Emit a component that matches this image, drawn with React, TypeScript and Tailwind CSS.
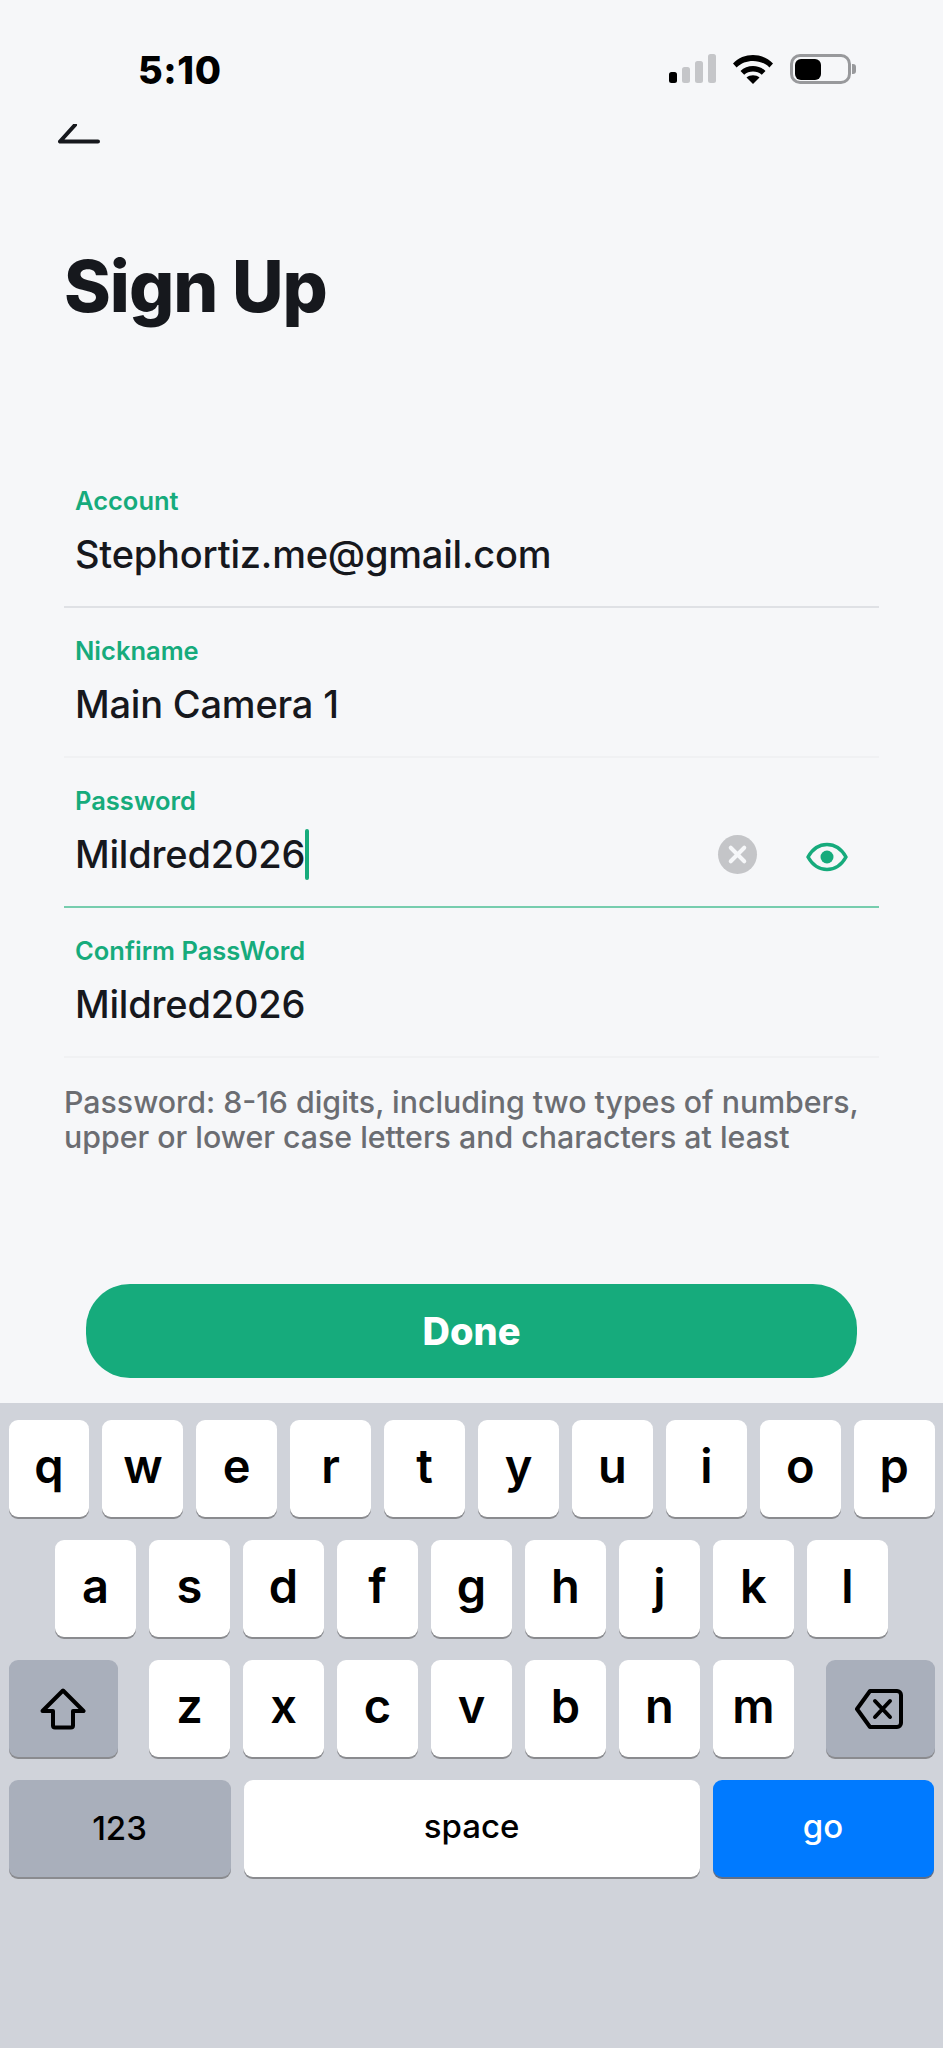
import { X } from "lucide-react"

const rowOne = ["q", "w", "e", "r", "t", "y", "u", "i", "o", "p"]
const rowTwo = ["a", "s", "d", "f", "g", "h", "j", "k", "l"]
const rowThree = ["z", "x", "c", "v", "b", "n", "m"]

function StatusBar() {
  return (
    <div className="flex h-[120px] items-start justify-between pl-[138px] pr-[87px] pt-[50px]">
      <span className="text-[38px] leading-[40px] font-extrabold tracking-[0.6px] text-black">5:10</span>
      <div className="flex items-end pt-[4px]">
        <svg width="56" height="30" viewBox="0 0 56 30" className="mr-[7px]">
          <rect x="0" y="18" width="8" height="11" rx="2.5" fill="#000" />
          <rect x="13" y="13" width="8" height="16" rx="2.5" fill="#c5c6c9" />
          <rect x="26" y="7" width="8" height="22" rx="2.5" fill="#c5c6c9" />
          <rect x="39" y="0" width="8" height="29" rx="2.5" fill="#c5c6c9" />
        </svg>
        <svg width="42" height="30" viewBox="0 0 42 30" className="mr-[16px]">
          <path d="M1 9.5C11.5 -1.8 30.5 -1.8 41 9.5L37.4 13.4C29 4.8 13 4.8 4.6 13.4Z" fill="#000" />
          <path d="M8.5 17C15 10.2 27 10.2 33.5 17L29.8 20.8C25 16.4 17 16.4 12.2 20.8Z" fill="#000" />
          <path d="M14.5 23.6C18 20.6 24 20.6 27.5 23.6L21 30Z" fill="#000" />
        </svg>
        <div className="flex items-center">
          <div className="flex h-[30px] w-[61px] items-center rounded-[10px] border-[3px] border-[#98999c] p-[2px]">
            <div className="h-[21px] w-[26px] rounded-[6px] bg-black" />
          </div>
          <div className="ml-[1px] h-[10px] w-[4px] rounded-r-[3px] bg-[#98999c]" />
        </div>
      </div>
    </div>
  )
}

function Field({
  label,
  value,
  lineClass,
  active,
}: {
  label: string
  value: string
  lineClass: string
  active?: boolean
}) {
  return (
    <div className={`flex h-[150px] flex-col border-b-2 pl-[11px] pt-[28px] ${lineClass}`}>
      <span className="text-[25.5px] leading-[30px] font-semibold text-[#16ab7c]">{label}</span>
      <div className="mt-[12px] flex h-[52px] items-center">
        <span className="text-[38px] leading-[52px] font-medium tracking-[-0.2px] text-[#16181d]">{value}</span>
        {active && (
          <>
            <div className="h-[51px] w-[3.5px] rounded-full bg-[#16ab7c]" />
            <div className="ml-auto mr-[31px] flex items-center gap-[49px]">
              <div className="flex h-[39px] w-[39px] items-center justify-center rounded-full bg-[#c4c5c8]">
                <X size={27} color="#f6f7f9" strokeWidth={3.6} />
              </div>
              <svg width="42" height="30" viewBox="0 0 42 30" className="mt-[5px]">
                <path
                  d="M2 15C6.5 7 13 2.5 21 2.5S35.5 7 40 15C35.5 23 29 27.5 21 27.5S6.5 23 2 15Z"
                  fill="none"
                  stroke="#16ab7c"
                  strokeWidth="3.5"
                  strokeLinejoin="round"
                />
                <circle cx="21" cy="15" r="6.5" fill="#16ab7c" />
              </svg>
            </div>
          </>
        )}
      </div>
    </div>
  )
}

function Key({ label }: { label: string }) {
  return (
    <div className="flex h-[97px] w-[81px] items-center justify-center rounded-[9px] bg-white pb-[6px] text-[47px] leading-none font-semibold text-black shadow-[0_2px_0_#8a8b8f]">
      {label}
    </div>
  )
}

function Keyboard() {
  return (
    <div className="flex flex-1 flex-col gap-[23px] bg-[#d0d3da] px-[8.5px] pt-[17px] font-['Inter',sans-serif]">
      <div className="flex gap-[13px]">
        {rowOne.map((k) => (
          <Key key={k} label={k} />
        ))}
      </div>
      <div className="flex gap-[13px] pl-[46.5px]">
        {rowTwo.map((k) => (
          <Key key={k} label={k} />
        ))}
      </div>
      <div className="flex items-center justify-between">
        <div className="flex h-[97px] w-[109px] items-center justify-center rounded-[9px] bg-[#a9afbb] shadow-[0_2px_0_#8a8b8f]">
          <svg width="46" height="42" viewBox="0 0 46 42" fill="none">
            <path
              d="M23 2.5L43.5 23H33V37.5C33 38.6 32.1 39.5 31 39.5H15C13.9 39.5 13 38.6 13 37.5V23H2.5Z"
              stroke="#000"
              strokeWidth="4"
              strokeLinejoin="round"
            />
          </svg>
        </div>
        <div className="flex gap-[13px]">
          {rowThree.map((k) => (
            <Key key={k} label={k} />
          ))}
        </div>
        <div className="flex h-[97px] w-[109px] items-center justify-center rounded-[9px] bg-[#a9afbb] shadow-[0_2px_0_#8a8b8f]">
          <svg width="48" height="40" viewBox="0 0 48 40" fill="none" className="mr-[3px]">
            <path
              d="M15 2H42C44.2 2 46 3.8 46 6V34C46 36.2 44.2 38 42 38H15L2 20Z"
              stroke="#000"
              strokeWidth="4"
              strokeLinejoin="round"
            />
            <path d="M20 12L35 28M35 12L20 28" stroke="#000" strokeWidth="4" strokeLinecap="round" />
          </svg>
        </div>
      </div>
      <div className="flex gap-[13px]">
        <div className="flex h-[97px] w-[222px] items-center justify-center rounded-[9px] bg-[#a9afbb] text-[33px] font-medium text-black shadow-[0_2px_0_#8a8b8f]">
          123
        </div>
        <div className="flex h-[97px] w-[456px] items-center justify-center rounded-[9px] bg-white pb-[3px] text-[33px] font-medium text-black shadow-[0_2px_0_#8a8b8f]">
          space
        </div>
        <div className="flex h-[97px] w-[221px] items-center justify-center rounded-[9px] bg-[#007aff] pb-[3px] text-[33px] font-medium text-white shadow-[0_2px_0_#5f6f88]">
          go
        </div>
      </div>
    </div>
  )
}

export default function App() {
  return (
    <div className="flex h-[2048px] w-[943px] flex-col overflow-hidden bg-[#f6f7f9] font-['Inter',sans-serif]">
      <StatusBar />

      <svg width="44" height="20" viewBox="0 0 44 20" className="ml-[58px] mt-[4px] overflow-hidden">
        <path d="M2 17.5H40M2 17.5L17 1" stroke="#16181d" strokeWidth="4" strokeLinecap="round" fill="none" />
      </svg>

      <h1 className="ml-[64px] mt-[101px] text-[71px] leading-[82px] font-extrabold tracking-[-1px] text-[#16181d]">
        Sign Up
      </h1>

      <div className="mx-[64px] mt-[131px] flex flex-col">
        <Field label="Account" value="Stephortiz.me@gmail.com" lineClass="border-[#dfe1e5]" />
        <Field label="Nickname" value="Main Camera 1" lineClass="border-[#f0f1f3]" />
        <Field label="Password" value="Mildred2026" lineClass="border-[#76cdae]" active />
        <Field label="Confirm PassWord" value="Mildred2026" lineClass="border-[#f0f1f3]" />
        <p className="mt-[27px] whitespace-pre-line text-[30.3px] leading-[35px] font-medium text-[#6b6d72]">
          {"Password: 8-16 digits, including two types of numbers,\nupper or lower case letters and characters at least"}
        </p>
      </div>

      <button className="mx-auto mt-[129px] flex h-[94px] w-[771px] items-center justify-center rounded-[44px] bg-[#16ab7c] text-[38px] font-extrabold text-white">
        Done
      </button>

      <div className="mt-[25px] flex flex-1 flex-col">
        <Keyboard />
      </div>
    </div>
  )
}
